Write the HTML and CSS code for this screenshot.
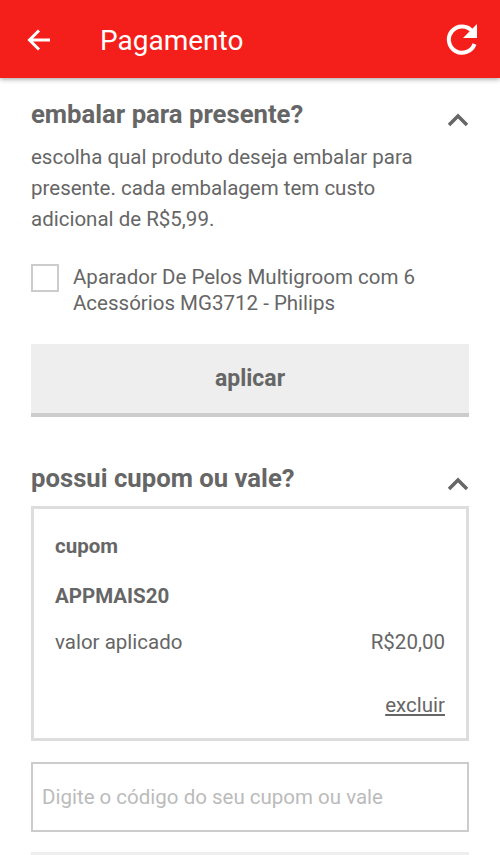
FILE: index.html
```html
<!DOCTYPE html>
<html lang="pt-BR">
<head>
<meta charset="utf-8">
<title>Pagamento</title>
<link rel="stylesheet" href="styles.css">
</head>
<body>
<header class="bar">
  <svg class="back" width="24" height="22" viewBox="0 0 24 22"><path d="M23 11H3M12 1.5 2.5 11 12 20.500"/></svg>
  <h1><span class="fit" >Pagamento</span></h1>
  <svg class="reload" width="32" height="32" viewBox="0 0 32 32"><path class="arc" d="M26.500 7.500A13.200 13.200 0 1 0 28.500 20"/><path class="tip" d="M31 0V14H17Z"/></svg>
</header>
<main>
  <section class="gift">
    <div class="head"><h2>embalar para presente?</h2><svg class="chev" width="22" height="14" viewBox="0 0 22 14"><path d="M2 12 11 3 20 12"/></svg></div>
    <p class="desc">escolha qual produto deseja embalar para<br>presente. cada embalagem tem custo<br>adicional de R$5,99.</p>
    <label class="option"><span class="box"></span><span>Aparador De Pelos Multigroom com 6<br>Acessórios MG3712 - Philips</span></label>
    <button class="apply">aplicar</button>
  </section>
  <section class="coupon">
    <div class="head"><h2>possui cupom ou vale?</h2><svg class="chev" width="22" height="14" viewBox="0 0 22 14"><path d="M2 12 11 3 20 12"/></svg></div>
    <div class="card">
      <strong class="label">cupom</strong>
      <strong class="code">APPMAIS20</strong>
      <div class="row"><span>valor aplicado</span><span>R$20,00</span></div>
      <a class="remove">excluir</a>
    </div>
    <div class="field">Digite o código do seu cupom ou vale</div>
    <div class="next"></div>
  </section>
</main>
</body>
</html>
```

FILE: styles.css
```css
* { box-sizing: border-box; }
body { margin: 0; height: 855px; overflow: hidden; background: #fff; color: #666; font: 20.5px/31px Roboto, sans-serif; }
h1, h2, p { margin: 0; }
svg { display: block; fill: none; flex: none; }
.bar { height: 78px; background: #f41f1b; display: flex; align-items: center; padding: 2px 22px 0 27px; color: #fff; box-shadow: 0 1px 5px rgba(0,0,0,.4); }
.bar h1 { font-size: 28px; font-weight: 400; margin-left: 49px; flex: 1; }
.back path { stroke: #fff; stroke-width: 3; }
.reload .arc { stroke: #fff; stroke-width: 4; }
.reload .tip { fill: #fff; }
main { padding: 0 31px; }
.head { display: flex; justify-content: space-between; height: 36px; }
.gift .head { margin-top: 21px; }
h2 { font-size: 25.7px; font-weight: 700; line-height: 31px; }
.chev { margin-top: 14px; }
.chev path { stroke: #666; stroke-width: 3.5; }
.desc { margin-top: 7px; }
.option { display: flex; gap: 14px; margin-top: 29px; line-height: 26px; }
.box { width: 28px; height: 28px; border: 2px solid #ccc; }
.apply { display: block; width: 438px; height: 73px; margin-top: 28px; padding: 0; border: 0; border-bottom: 4px solid #ccc; background: #eee; color: #666; font: 700 23px/31px Roboto, sans-serif; }
.coupon .head { margin-top: 46px; height: 43px; }
.card { height: 235px; border: 3px solid #ddd; padding: 22px 21px; display: flex; flex-direction: column; line-height: 30px; }
.code { margin-top: 20px; }
.row { display: flex; justify-content: space-between; margin-top: 16px; }
.remove { align-self: flex-end; margin-top: 33px; text-decoration: underline; }
.field { height: 70px; border: 2px solid #ccc; margin-top: 21px; padding: 18px 9px; color: #bbb; }
.next { height: 10px; margin-top: 20px; background: #eee; }
```
